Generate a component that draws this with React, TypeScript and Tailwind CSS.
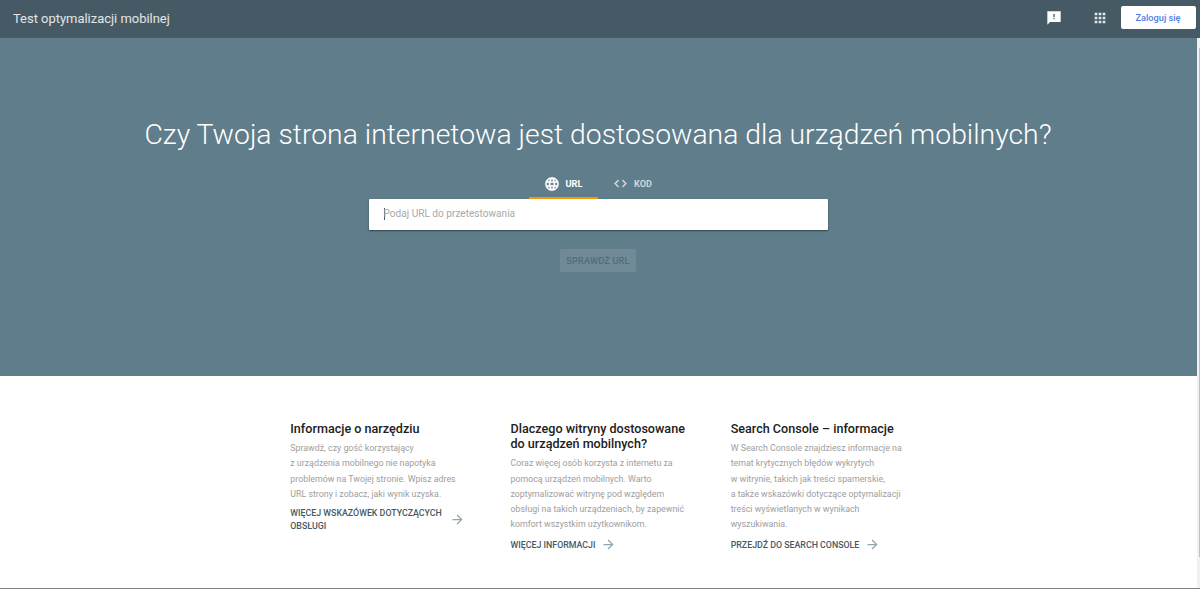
import { useState } from "react";
import { MdApps, MdArrowForward, MdCode, MdLanguage } from "react-icons/md";

interface InfoItem {
  title: string[];
  body: string[];
  link: string[];
}

const INFO: InfoItem[] = [
  {
    title: ["Informacje o narzędziu"],
    body: [
      "Sprawdź, czy gość korzystający",
      "z urządzenia mobilnego nie napotyka",
      "problemów na Twojej stronie. Wpisz adres",
      "URL strony i zobacz, jaki wynik uzyska.",
    ],
    link: ["Więcej wskazówek dotyczących", "obsługi"],
  },
  {
    title: ["Dlaczego witryny dostosowane", "do urządzeń mobilnych?"],
    body: [
      "Coraz więcej osób korzysta z internetu za",
      "pomocą urządzeń mobilnych. Warto",
      "zoptymalizować witrynę pod względem",
      "obsługi na takich urządzeniach, by zapewnić",
      "komfort wszystkim użytkownikom.",
    ],
    link: ["Więcej informacji"],
  },
  {
    title: ["Search Console – informacje"],
    body: [
      "W Search Console znajdziesz informacje na",
      "temat krytycznych błędów wykrytych",
      "w witrynie, takich jak treści spamerskie,",
      "a także wskazówki dotyczące optymalizacji",
      "treści wyświetlanych w wynikach",
      "wyszukiwania.",
    ],
    link: ["Przejdź do Search Console"],
  },
];

export default function App() {
  const [tab, setTab] = useState<"url" | "code">("url");

  return (
    <div className="flex h-[589px] w-full flex-col overflow-hidden border-b border-[#808080] bg-white font-['Roboto',sans-serif]">
      <TopBar />
      <div className="flex min-h-0 flex-1">
        <main className="min-w-0 flex-1">
          <section className="flex h-[338px] flex-col items-center bg-[#607d8b] pt-[77px] pr-px">
            <h1 className="text-[28.35px] leading-10 font-light whitespace-nowrap text-white">
              Czy Twoja strona internetowa jest dostosowana dla urządzeń mobilnych?
            </h1>

            <div className="mt-[14px] flex h-[30px]">
              <button
                type="button"
                onClick={() => setTab("url")}
                className={`flex w-[69px] items-center justify-center gap-1.5 border-b-[2.5px] pt-px pr-px text-[9.2px] font-bold ${
                  tab === "url" ? "border-[#ff9800] text-white" : "border-transparent text-white/70"
                }`}
              >
                {/* first path is the icon's empty bounding box, keep it unstroked */}
                <MdLanguage className="size-4 [&>path:first-child]:stroke-none" strokeWidth={0.5} />
                URL
              </button>
              <button
                type="button"
                onClick={() => setTab("code")}
                className={`flex w-[69px] items-center justify-center gap-1.5 border-b-[2.5px] pt-px text-[9.2px] font-bold ${
                  tab === "code" ? "border-[#ff9800] text-white" : "border-transparent text-white/70"
                }`}
              >
                <MdCode className="size-[15px] [&>path:first-child]:stroke-none" strokeWidth={0.5} />
                KOD
              </button>
            </div>

            <div className="flex h-[31px] w-[459px] items-center rounded-[1px] bg-white px-[15px] pb-px shadow-[0_1px_2px_rgba(0,0,0,0.45)]">
              <span className="h-3 w-px bg-[#555]" />
              <span className="-ml-px text-[10.1px] text-[#a9a9a9]">Podaj URL do przetestowania</span>
            </div>

            <button
              type="button"
              disabled
              className="mt-[19px] h-[23px] w-[76px] rounded-[2px] bg-[#708b97] text-[9.2px] font-medium tracking-[0.15px] text-[#536d79]"
            >
              SPRAWDŹ URL
            </button>
          </section>

          <section className="flex gap-[30px] pt-[45px] pl-[290.3px]">
            {INFO.map((item) => (
              <InfoColumn key={item.link[0]} item={item} />
            ))}
          </section>
        </main>

        {/* Scrollbar */}
        <div className="w-[3px] bg-[#f1f1f1] pt-2.5 pl-0.5">
          <div className="h-[509px] bg-[#c1c1c1]" />
        </div>
      </div>
    </div>
  );
}

function TopBar() {
  return (
    <header className="flex h-[38px] shrink-0 items-center bg-[#455a64] pr-[4.5px] pb-[3px] pl-[13px]">
      <span className="pt-0.5 text-[12.95px] text-white/85">Test optymalizacji mobilnej</span>
      <FeedbackIcon />
      <MdApps className="ml-[30.5px] size-4 text-white/85" />
      <button
        type="button"
        className="ml-[12.5px] h-[23px] w-[75px] rounded-[2px] bg-white text-[9.2px] font-medium text-[#4d7fe8]"
      >
        Zaloguj się
      </button>
    </header>
  );
}

// Speech bubble with square corners and an exclamation mark
function FeedbackIcon() {
  return (
    <svg viewBox="0 0 24 24" className="ml-auto size-4 text-white" fill="currentColor" aria-hidden="true">
      <path d="M2 2h20v16H6l-4 4V2zm9 4v5h2V6h-2zm0 6.2V14h2v-1.8h-2z" fillRule="evenodd" />
    </svg>
  );
}

function InfoColumn({ item }: { item: InfoItem }) {
  return (
    <article className="w-[190.2px] whitespace-nowrap">
      <h2 className="text-[12.6px] leading-[15.2px] font-medium text-[#212121]">
        {item.title.map((line) => (
          <span key={line} className="block">
            {line}
          </span>
        ))}
      </h2>
      <p className="mt-[5px] text-[8.84px] leading-[15.2px] text-[#9e9e9e]">
        {item.body.map((line) => (
          <span key={line} className="block">
            {line}
          </span>
        ))}
      </p>
      <a href="#" className="mt-[5px] flex items-center text-[8.82px] leading-[12.5px] font-medium text-[#455a64] uppercase">
        <span>
          {item.link.map((line) => (
            <span key={line} className="block">
              {line}
            </span>
          ))}
        </span>
        <MdArrowForward className={`size-[15px] text-[#90a4ae] ${item.link.length > 1 ? "ml-2" : "ml-[5.5px]"}`} />
      </a>
    </article>
  );
}
